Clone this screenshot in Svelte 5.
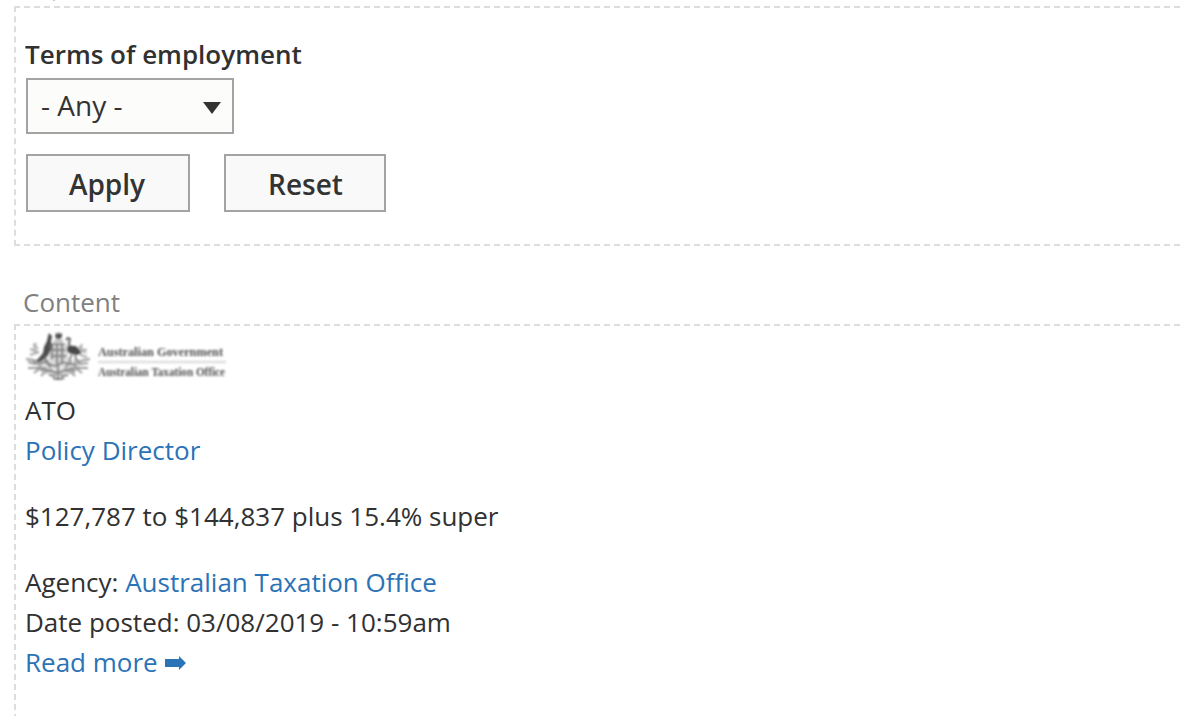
<script>
  const job = {
    code: 'ATO',
    title: 'Policy Director',
    salary: '$127,787 to $144,837 plus 15.4% super',
    agency: 'Australian Taxation Office',
    posted: '03/08/2019 - 10:59am'
  };
</script>

<div class="page">
  <div class="descender"></div>
  <section class="panel filters">
    <label class="field-label" for="terms">Terms of employment</label>
    <button class="select" id="terms" type="button">
      <span>- Any -</span>
      <svg width="18" height="12" viewBox="0 0 18 12"><path d="M0 0H18L9 12Z" fill="#333" /></svg>
    </button>
    <div class="actions">
      <button class="btn apply" type="button">Apply</button>
      <button class="btn reset" type="button">Reset</button>
    </div>
  </section>

  <h2>Content</h2>

  <section class="panel results">
    <svg class="logo" width="206" height="52" viewBox="0 0 206 52">
      <g class="crest" fill="none" stroke-width="1.9">
        <path d="M26 13h16l1 14-2 8-8 5-8-5-2-9z" fill="#d4d4d4" stroke="none" />
        <path d="M11 31q12-4 22 3 10-7 22-3l-5 11-10 4H26l-11-5z" fill="#e2e2e2" stroke="none" />
        <path d="M31 3h1l1 1 1-2 1 2 2-1v4l-2 2h-3l-2-2z" fill="#555" stroke="none" />
        <path d="M29 11h9" stroke="#aaa" />
        <path d="M27 14h12M26 20h14M26 26h15M27 15v14M32 13v23M37 13v20" stroke="#888" />
        <path d="M24 3l3 3-1 6 1 5-4 8-3 4-6 3-8 1 7-4 5-6 1-6 3-6 1-5z" fill="#4c4c4c" stroke="none" />
        <path d="M19 27l3 4-4 2M24 16l4 2" stroke="#777" />
        <path d="M41 10l2-2 2 1-1 4 1 5 4 3" stroke="#606060" />
        <path d="M43 16q7-1 9 1l5 6-5 2-8-2-2-3z" fill="#484848" stroke="none" />
        <path d="M47 24l-3 7M50 24l1 6 3 1" stroke="#808080" />
        <path d="M8 14l5 5M11 13l-2 7M5 19l8 3M5 25l9-3M57 14l-2 6M62 19l-7 3M54 16l7 7M55 25l7 2" stroke="#aaa" />
        <path d="M1 29l7 1 5 2M3 32l7 2 6-1M3 38h7l7-1M9 43l5-4 7-1M16 46l4-4 7-2M65 29l-6 1-6 2M63 33l-7 1-7-1M63 38h-7l-7-1M57 43l-5-4-7-1M50 46l-4-4-7-2" stroke="#999" />
        <path d="M14 35q5-5 9-2t8 3q6-4 10-3t10 2M16 41q5-3 9 0l8 2 8-3q5-2 9 2M24 45l5 1 4-5 4 5 6-1M33 36v13M20 31l6 7M46 31l-6 7" stroke="#888" />
        <path d="M28 48q5 2 11 0" stroke="#777" />
      </g>
      <path d="M73 32H201" stroke="#dedede" stroke-width="2.5" />
      <g class="logo-text">
        <text x="73" y="26" textLength="125" lengthAdjust="spacingAndGlyphs">Australian Government</text>
        <text x="73" y="46" textLength="127" lengthAdjust="spacingAndGlyphs">Australian Taxation Office</text>
      </g>
    </svg>
    <div class="line">{job.code}</div>
    <div class="line"><span class="link">{job.title}</span></div>
    <p>{job.salary}</p>
    <div class="line">Agency: <span class="link">{job.agency}</span></div>
    <div class="line">Date posted: {job.posted}</div>
    <div class="line link more">
      <span>Read more</span>
      <svg width="21" height="14" viewBox="0 0 21 14"><path d="M0 3H14V0L21 7L14 14V11H0Z" fill="currentColor" /></svg>
    </div>
  </section>
</div>

<style>
  :global(body) { margin: 0; background: #fff; }
  .page {
    box-sizing: border-box;
    width: 1180px;
    height: 716px;
    padding-left: 14px;
    overflow: hidden;
    font: 26px/40px "Open Sans", sans-serif;
    color: #313131;
  }
  .descender { width: 2px; height: 1px; margin: 0 0 5px 39px; background: #c8c8c8; }
  .panel { box-sizing: border-box; width: 1176px; border: 2px dashed #ddd; }
  .filters { height: 240px; padding: 26px 10px 0; }
  .field-label { display: block; height: 44px; margin-left: -1px; font-weight: 600; }
  button { box-sizing: border-box; border: 2px solid #a3a3a3; color: #333; font-family: inherit; }
  .select {
    display: flex;
    align-items: center;
    justify-content: space-between;
    width: 208px;
    height: 56px;
    padding: 0 11px 2px 13px;
    background: #fcfcfa;
    font-size: 28px;
    line-height: 50px;
  }
  .select svg { margin-top: 6px; }
  .actions { display: flex; gap: 34px; margin-top: 20px; }
  .btn { height: 58px; padding: 1px 0 0; background: #f9f9f9; font-size: 28px; font-weight: 600; line-height: 52px; }
  .apply { width: 164px; padding-right: 2px; }
  .reset { width: 162px; padding-left: 1px; }
  h2 { height: 40px; margin: 36px 0 2px 9px; color: #808080; font-size: 26px; font-weight: 400; line-height: 40px; }
  .results { height: 516px; padding: 4px 9px 0; }
  .logo { display: block; height: 52px; margin: 0 0 8px; overflow: visible; filter: blur(0.8px); }
  .logo-text { font: bold 12px "Liberation Serif", serif; fill: #505050; }
  .line { height: 40px; white-space: nowrap; }
  p { margin: 26px 0; }
  .link { color: #2b73b7; }
  .more { display: flex; align-items: center; gap: 7px; }
  .more svg { margin-top: 2px; }
</style>
